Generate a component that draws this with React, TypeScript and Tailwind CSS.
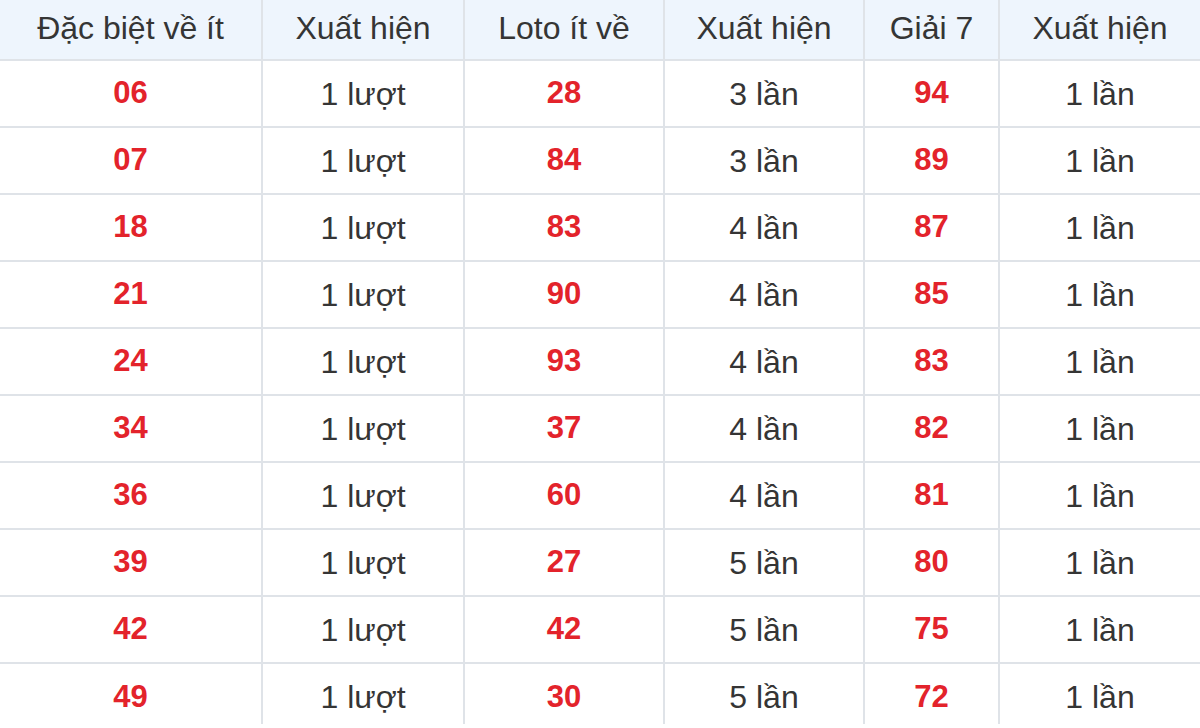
import React from "react";

const rows: [string, string, string, string, string, string][] = [
  ["06", "1 lượt", "28", "3 lần", "94", "1 lần"],
  ["07", "1 lượt", "84", "3 lần", "89", "1 lần"],
  ["18", "1 lượt", "83", "4 lần", "87", "1 lần"],
  ["21", "1 lượt", "90", "4 lần", "85", "1 lần"],
  ["24", "1 lượt", "93", "4 lần", "83", "1 lần"],
  ["34", "1 lượt", "37", "4 lần", "82", "1 lần"],
  ["36", "1 lượt", "60", "4 lần", "81", "1 lần"],
  ["39", "1 lượt", "27", "5 lần", "80", "1 lần"],
  ["42", "1 lượt", "42", "5 lần", "75", "1 lần"],
  ["49", "1 lượt", "30", "5 lần", "72", "1 lần"],
];

const headers = ["Đặc biệt về ít", "Xuất hiện", "Loto ít về", "Xuất hiện", "Giải 7", "Xuất hiện"];

export default function App() {
  return (
    <div
      className="w-[1200px] h-[728px] overflow-hidden bg-white text-[#353535]"
      style={{ fontFamily: '"Liberation Sans", Arial, sans-serif' }}
    >
      <div className="grid grid-cols-[263px_202px_200px_200px_135px_200px]">
        {headers.map((h, i) => (
          <div
            key={i}
            className={`h-[61px] flex items-center justify-center bg-[#eef5fd] border-b-2 border-[#dfe3e8] text-[32px] pb-[4px] ${
              i < 5 ? "border-r-2" : ""
            }`}
          >
            {h}
          </div>
        ))}
        {rows.map((r, ri) =>
          r.map((c, ci) => (
            <div
              key={`${ri}-${ci}`}
              className={`flex items-center justify-center border-[#dfe3e8] ${
                ci < 5 ? "border-r-2" : ""
              } ${ri < rows.length - 1 ? "h-[67px] border-b-2" : "h-[60px] pt-[6px]"} ${
                ci % 2 === 0 ? "font-bold text-[31px] text-[#e3232b]" : "text-[32px] text-[#353535]"
              }`}
            >
              {c}
            </div>
          ))
        )}
      </div>
    </div>
  );
}
